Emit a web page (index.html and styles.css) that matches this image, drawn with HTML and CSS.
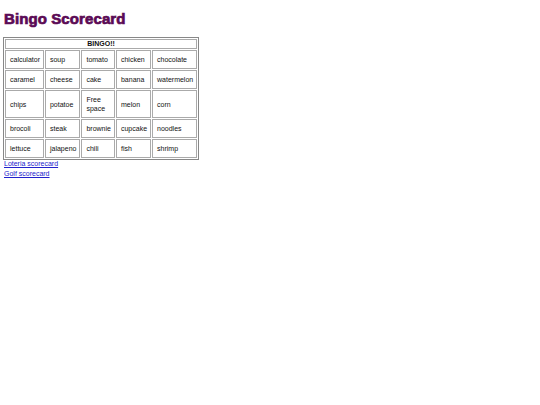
FILE: index.html
```html
<!DOCTYPE html>
<html>
<head>
<meta charset="utf-8">
<title>Bingo Scorecard</title>
<link rel="stylesheet" href="styles.css">
</head>
<body>
<h1 class="title">Bingo Scorecard</h1>
<table class="card" border="1">
<tr><th colspan="5" class="head">BINGO!!</th></tr>
<tr><td>calculator</td><td>soup</td><td>tomato</td><td>chicken</td><td>chocolate</td></tr>
<tr><td>caramel</td><td>cheese</td><td>cake</td><td>banana</td><td>watermelon</td></tr>
<tr><td>chips</td><td>potatoe</td><td>Free<br>space</td><td>melon</td><td>corn</td></tr>
<tr><td>brocoli</td><td>steak</td><td>brownie</td><td>cupcake</td><td>noodles</td></tr>
<tr><td>lettuce</td><td>jalapeno</td><td>chili</td><td>fish</td><td>shrimp</td></tr>
</table>
<div class="links">
<a href="#">Loteria scorecard</a><br>
<a href="#">Golf scorecard</a>
</div>
</body>
</html>
```
FILE: styles.css
```css
body {
  margin: 3px 3px;
  font-family: "Liberation Sans", Arial, sans-serif;
  font-size: 7px;
  color: #111;
  background: #fff;
}
.title {
  font-family: "Liberation Sans", Arial, sans-serif;
  font-weight: 900;
  font-size: 15px;
  letter-spacing: 0.1px;
  -webkit-text-stroke: 0.7px #5b0a55;
  color: #5b0a55;
  margin: 9px 1px 11px;
  line-height: 14px;
}
.card {
  border-collapse: separate;
  border-spacing: 1px;
  border: 1px solid #888;
  width: 194px;
}
.card td, .card th {
  border: 1px solid #aaa;
  font-size: 7px;
  line-height: 9px;
}
.card td {
  padding: 4px 3px 4px 4px;
}
.card th {
  padding: 0;
  font-weight: bold;
  line-height: 8px;
}
.links {
  line-height: 10px;
  margin-top: -1px;
  margin-left: 1px;
}
.links a {
  color: #22c;
}
```
